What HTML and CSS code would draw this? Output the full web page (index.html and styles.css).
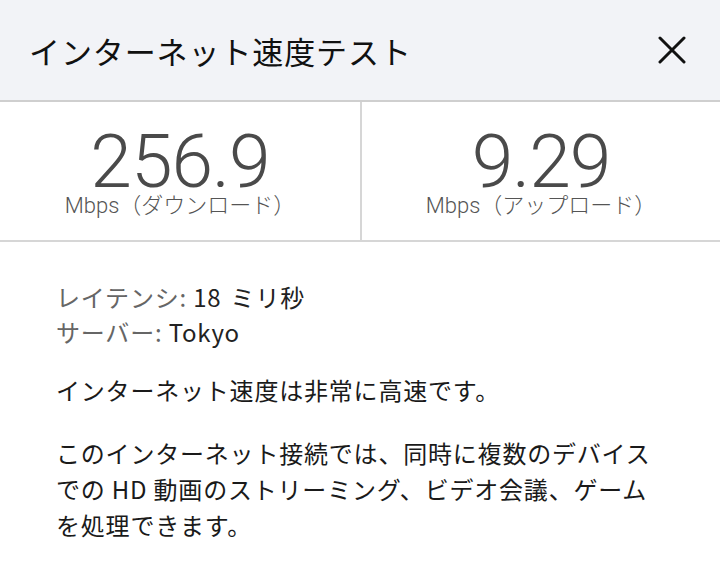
FILE: index.html
```html
<!DOCTYPE html>
<html lang="ja">
<head>
<meta charset="utf-8">
<link rel="stylesheet" href="styles.css">
</head>
<body>
<div class="panel">
  <header class="head">
    <h1 class="title">インターネット速度テスト</h1>
    <button class="close" aria-label="閉じる">
      <svg width="28" height="28" viewBox="0 0 28 28"><path d="M2 2 L26 26 M26 2 L2 26" stroke="#111" stroke-width="3" stroke-linecap="round"/></svg>
    </button>
  </header>
  <section class="stats">
    <div class="stat">
      <div class="num">256.9</div>
      <div class="unit">Mbps（ダウンロード）</div>
    </div>
    <div class="stat">
      <div class="num">9.29</div>
      <div class="unit">Mbps（アップロード）</div>
    </div>
  </section>
  <section class="info">
    <div class="meta">
      <div><span class="label">レイテンシ:</span> <span class="val">18 ミリ秒</span></div>
      <div><span class="label">サーバー:</span> <span class="val">Tokyo</span></div>
    </div>
    <p class="txt">インターネット速度は非常に高速です。</p>
    <p class="txt">このインターネット接続では、同時に複数のデバイスでの HD 動画のストリーミング、ビデオ会議、ゲームを処理できます。</p>
  </section>
</div>
</body>
</html>
```
FILE: styles.css
```css
html, body {
  margin: 0;
  padding: 0;
  background: #ffffff;
}
body {
  font-family: "Noto Sans CJK JP", "Noto Sans", sans-serif;
  color: #222;
}
.panel {
  width: 720px;
}
.head {
  height: 100px;
  background: #f2f3f7;
  border-bottom: 2px solid #cfcfcf;
  display: flex;
  align-items: center;
  justify-content: space-between;
  padding: 0 34px 0 29px;
}
.title {
  margin: 0;
  font-size: 31px;
  font-weight: 400;
  color: #111;
  letter-spacing: 0.9px;
}
.close {
  border: 0;
  background: none;
  padding: 0;
  width: 28px;
  height: 28px;
  display: flex;
}
.stats {
  display: grid;
  grid-template-columns: 1fr 1fr;
  height: 138px;
  border-bottom: 2px solid #d6d6d6;
}
.stat {
  display: flex;
  flex-direction: column;
  align-items: center;
  padding-top: 27px;
}
.stat + .stat {
  border-left: 2px solid #d6d6d6;
}
.num {
  font-family: Roboto, "Liberation Sans", sans-serif;
  font-weight: 300;
  font-size: 75px;
  line-height: 64px;
  color: #4a4a4a;
  letter-spacing: -1px;
}
.unit {
  font-family: Roboto, "Noto Sans CJK JP", sans-serif;
  font-weight: 300;
  font-size: 22px;
  line-height: 26px;
  color: #555;
}
.info {
  padding: 37px 60px 0 56px;
  font-size: 24px;
  line-height: 35px;
  letter-spacing: 0.8px;
}
.meta .label {
  color: #666;
}
.meta .val {
  color: #222;
  word-spacing: 3px;
}
.txt {
  margin: 23px 0 0 0;
  color: #1a1a1a;
  line-height: 36px;
}
.txt + .txt {
  margin-top: 27px;
}
```
